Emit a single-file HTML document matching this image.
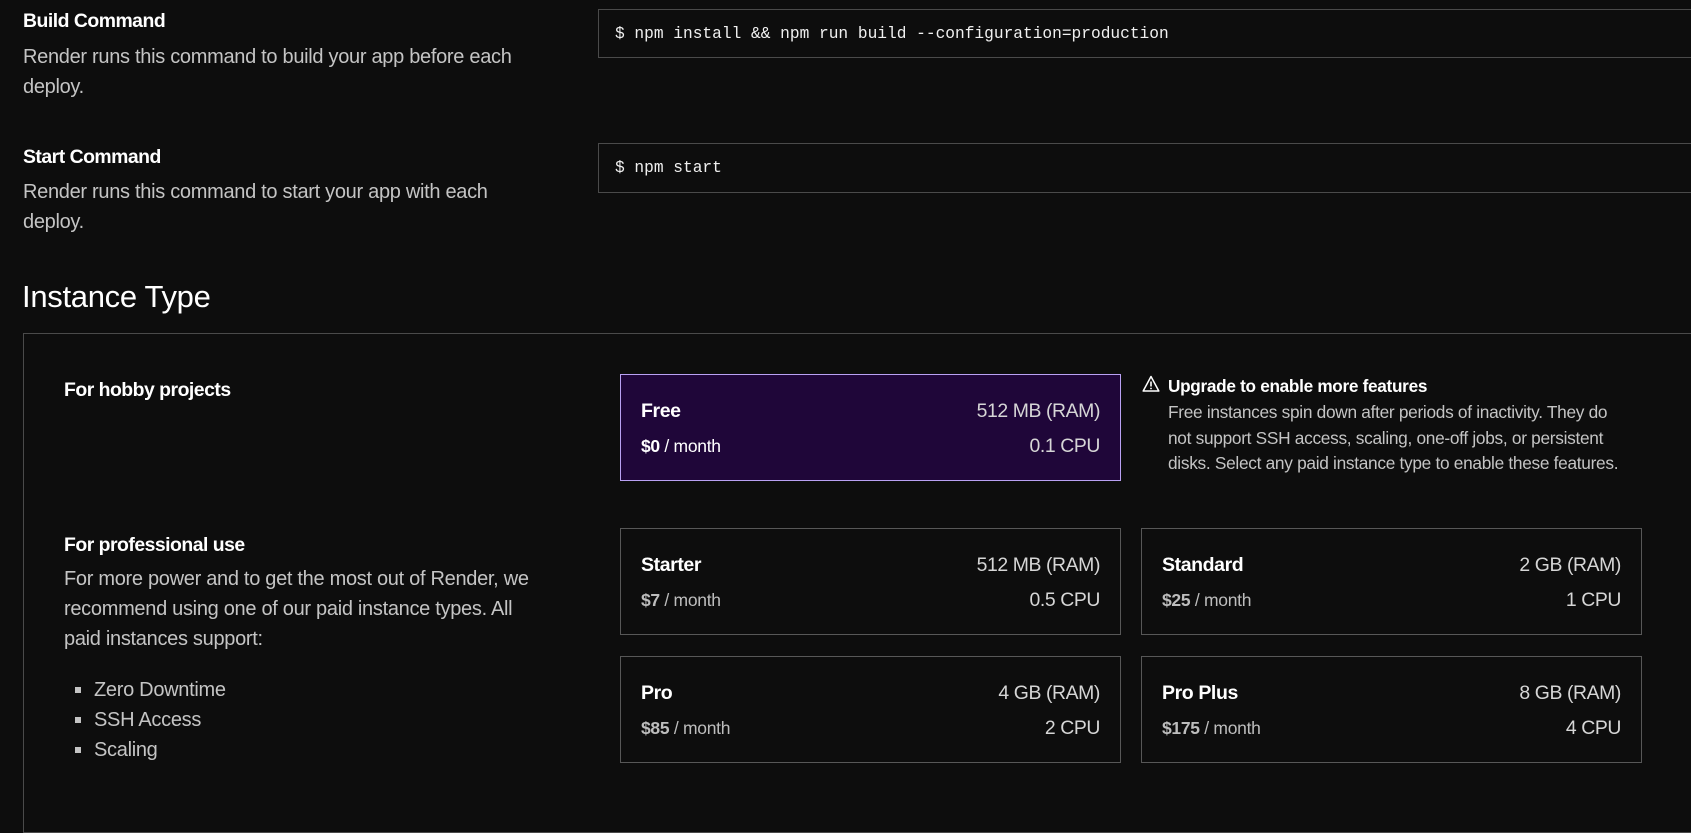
<!DOCTYPE html>
<html><head><meta charset="utf-8"><style>
*{margin:0;padding:0;box-sizing:border-box}
html,body{width:1691px;height:770px;overflow:hidden;background:#0d0d0d;color:#fff;font-family:"Liberation Sans",sans-serif}
.a{position:absolute;white-space:nowrap}
.lbl{font-weight:bold;font-size:19.4px;letter-spacing:-0.5px}
.desc{font-size:20px;color:#c4c4c4;line-height:30px;letter-spacing:-0.3px}
.inp{position:absolute;left:598px;width:1120px;border:1px solid #4a4a4a;background:#0d0d0d;font-family:"Liberation Mono",monospace;font-size:16.2px;color:#f0f0f0;padding-left:16px;display:flex;align-items:center}
.card{position:absolute;width:501px;height:107px;border:1px solid #575757}
.card .t{position:absolute;left:20px;top:25px;font-weight:bold;font-size:19.5px;letter-spacing:-0.4px}
.card .p{position:absolute;left:20px;top:61px;font-size:17.5px;color:#bdbdbd;letter-spacing:-0.3px}
.card .p b{color:#bdbdbd}
.card .r1{position:absolute;right:20px;top:25px;font-size:19.4px;color:#d6d6d6;letter-spacing:-0.4px}
.card .r2{position:absolute;right:20px;top:60px;font-size:19.4px;color:#d6d6d6;letter-spacing:-0.4px}
</style></head><body>
<div class="a lbl" style="left:23px;top:10px">Build Command</div>
<div class="a desc" style="left:23px;top:42px">Render runs this command to build your app before each<br>deploy.</div>
<div class="inp" style="top:9px;height:49px">$ npm install &amp;&amp; npm run build --configuration=production</div>

<div class="a lbl" style="left:23px;top:146px">Start Command</div>
<div class="a desc" style="left:23px;top:177px">Render runs this command to start your app with each<br>deploy.</div>
<div class="inp" style="top:143px;height:50px">$ npm start</div>

<div class="a" style="left:22px;top:279px;font-size:31px;letter-spacing:-0.3px">Instance Type</div>

<div style="position:absolute;left:23px;top:333px;width:1700px;height:500px;border:1px solid #4a4a4a"></div>

<div class="a lbl" style="left:64px;top:379px">For hobby projects</div>

<div class="card" style="left:620px;top:374px;background:#1f0639;border-color:#b9a1f3">
<div class="t" style="color:#fff">Free</div><div class="p" style="color:#fff"><b style="color:#fff">$0</b> / month</div>
<div class="r1">512 MB (RAM)</div><div class="r2">0.1 CPU</div></div>

<svg class="a" style="left:1142px;top:375px" width="18" height="18" viewBox="0 0 18 18"><path d="M9 1.5L1.2 16H16.8Z" fill="none" stroke="#fff" stroke-width="1.5" stroke-linejoin="round"/><path d="M9 6.5v5" stroke="#fff" stroke-width="1.6"/><circle cx="9" cy="13.5" r="0.9" fill="#fff"/></svg>
<div class="a" style="left:1168px;top:376px;font-weight:bold;font-size:17.2px;letter-spacing:-0.3px">Upgrade to enable more features</div>
<div class="a" style="left:1168px;top:400px;font-size:17.3px;line-height:25.5px;color:#c4c4c4;letter-spacing:-0.3px">Free instances spin down after periods of inactivity. They do<br>not support SSH access, scaling, one-off jobs, or persistent<br>disks. Select any paid instance type to enable these features.</div>

<div class="a lbl" style="left:64px;top:534px">For professional use</div>
<div class="a desc" style="left:64px;top:564px">For more power and to get the most out of Render, we<br>recommend using one of our paid instance types. All<br>paid instances support:</div>
<div class="a desc" style="left:94px;top:675px">Zero Downtime<br>SSH Access<br>Scaling</div>
<div class="a" style="left:75px;top:687px;width:6px;height:6px;background:#c4c4c4"></div>
<div class="a" style="left:75px;top:717px;width:6px;height:6px;background:#c4c4c4"></div>
<div class="a" style="left:75px;top:747px;width:6px;height:6px;background:#c4c4c4"></div>

<div class="card" style="left:620px;top:528px"><div class="t">Starter</div><div class="p"><b>$7</b> / month</div><div class="r1">512 MB (RAM)</div><div class="r2">0.5 CPU</div></div>
<div class="card" style="left:1141px;top:528px"><div class="t">Standard</div><div class="p"><b>$25</b> / month</div><div class="r1">2 GB (RAM)</div><div class="r2">1 CPU</div></div>
<div class="card" style="left:620px;top:656px"><div class="t">Pro</div><div class="p"><b>$85</b> / month</div><div class="r1">4 GB (RAM)</div><div class="r2">2 CPU</div></div>
<div class="card" style="left:1141px;top:656px"><div class="t">Pro Plus</div><div class="p"><b>$175</b> / month</div><div class="r1">8 GB (RAM)</div><div class="r2">4 CPU</div></div>
</body></html>
